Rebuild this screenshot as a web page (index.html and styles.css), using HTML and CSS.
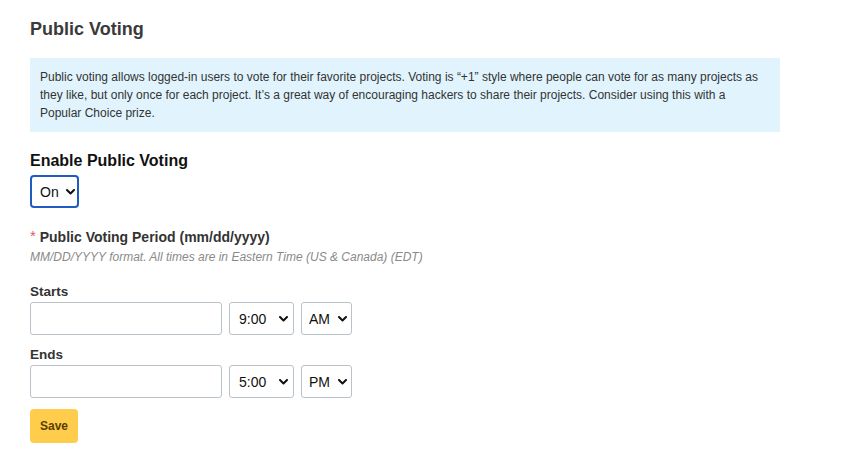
FILE: index.html
```html
<!DOCTYPE html>
<html lang="en">
<head>
<meta charset="utf-8">
<title>Public Voting</title>
<link rel="stylesheet" href="styles.css">
</head>
<body>
<main class="page">
  <h2 class="title">Public Voting</h2>
  <div class="info">Public voting allows logged-in users to vote for their favorite projects. Voting is “+1” style where people can vote for as many projects as they like, but only once for each project. It’s a great way of encouraging hackers to share their projects. Consider using this with a Popular Choice prize.</div>

  <h3 class="enable-label">Enable Public Voting</h3>
  <span class="select-wrap sel-on">
    <select class="select focused"><option>On</option><option>Off</option></select>
    <svg class="chev" width="9" height="6" viewBox="0 0 9 6"><path d="M1 1 L4.5 4.5 L8 1" fill="none" stroke="#111" stroke-width="2" stroke-linecap="round" stroke-linejoin="round"/></svg>
  </span>

  <div class="period-label"><span class="req">*</span> Public Voting Period (mm/dd/yyyy)</div>
  <div class="hint">MM/DD/YYYY format. All times are in Eastern Time (US &amp; Canada) (EDT)</div>

  <div class="field-label">Starts</div>
  <div class="row">
    <input class="text-input" type="text">
    <span class="select-wrap sel-time">
      <select class="select"><option>9:00</option></select>
      <svg class="chev" width="9" height="6" viewBox="0 0 9 6"><path d="M1 1 L4.5 4.5 L8 1" fill="none" stroke="#111" stroke-width="2" stroke-linecap="round" stroke-linejoin="round"/></svg>
    </span>
    <span class="select-wrap sel-ampm">
      <select class="select"><option>AM</option></select>
      <svg class="chev" width="9" height="6" viewBox="0 0 9 6"><path d="M1 1 L4.5 4.5 L8 1" fill="none" stroke="#111" stroke-width="2" stroke-linecap="round" stroke-linejoin="round"/></svg>
    </span>
  </div>

  <div class="field-label ends">Ends</div>
  <div class="row">
    <input class="text-input" type="text">
    <span class="select-wrap sel-time">
      <select class="select"><option>5:00</option></select>
      <svg class="chev" width="9" height="6" viewBox="0 0 9 6"><path d="M1 1 L4.5 4.5 L8 1" fill="none" stroke="#111" stroke-width="2" stroke-linecap="round" stroke-linejoin="round"/></svg>
    </span>
    <span class="select-wrap sel-ampm">
      <select class="select"><option>PM</option></select>
      <svg class="chev" width="9" height="6" viewBox="0 0 9 6"><path d="M1 1 L4.5 4.5 L8 1" fill="none" stroke="#111" stroke-width="2" stroke-linecap="round" stroke-linejoin="round"/></svg>
    </span>
  </div>

  <button class="save" type="button">Save</button>
</main>
</body>
</html>
```
FILE: styles.css
```css
* { box-sizing: border-box; }
html, body { margin: 0; padding: 0; background: #fff; }
body {
  font-family: "Liberation Sans", Arial, Helvetica, sans-serif;
  color: #333;
}
.page {
  padding: 18px 0 0 30px;
  display: flex;
  flex-direction: column;
  align-items: flex-start;
}
.title {
  margin: 0;
  font-size: 18px;
  line-height: 22px;
  font-weight: bold;
  color: #3a3a3a;
}
.info {
  margin-top: 18px;
  width: 750px;
  background: #e1f4fd;
  padding: 10px;
  font-size: 12px;
  line-height: 18px;
  color: #333;
}
.enable-label {
  margin: 19px 0 0 0;
  font-size: 16px;
  line-height: 20px;
  font-weight: bold;
  color: #111;
}
.select-wrap {
  position: relative;
  display: inline-flex;
}
.select {
  appearance: none;
  -webkit-appearance: none;
  font-family: "Liberation Sans", Arial, Helvetica, sans-serif;
  font-size: 14px;
  color: #111;
  background: #fff;
  border: 1px solid #b9c2c8;
  border-radius: 3px;
  height: 33px;
  padding: 0 0 0 9px;
  margin: 0;
  outline: none;
}
.select.focused {
  border: 2px solid #1e5dbf;
  border-radius: 4px;
  padding-left: 8px;
}
.chev {
  position: absolute;
  top: 14px;
  pointer-events: none;
}
.sel-on { margin-top: 4px; }
.sel-on .select { width: 49px; }
.sel-on .chev { right: 4px; }
.sel-time .select { width: 65px; }
.sel-time .chev { right: 6px; }
.sel-ampm .select { width: 51px; padding-left: 7px; }
.sel-ampm .chev { right: 5px; }

.period-label {
  margin-top: 20px;
  font-size: 14px;
  line-height: 18px;
  height: 18px;
  font-weight: bold;
  color: #333;
}
.req {
  color: #e5585c;
  font-weight: normal;
  font-size: 15px;
  line-height: 1;
  vertical-align: 1px;
}
.hint {
  margin-top: 3px;
  font-size: 12px;
  line-height: 16px;
  font-style: italic;
  color: #8a8a8a;
}
.field-label {
  margin-top: 18px;
  font-size: 13.5px;
  line-height: 17px;
  font-weight: bold;
  color: #333;
}
.field-label.ends { margin-top: 11px; }
.row {
  margin-top: 2px;
  display: flex;
  gap: 7px;
}
.text-input {
  width: 192px;
  height: 33px;
  border: 1px solid #b9c2c8;
  border-radius: 3px;
  margin: 0;
  padding: 0 8px;
  font-size: 14px;
  background: #fff;
  outline: none;
}
.save {
  margin-top: 11px;
  width: 48px;
  height: 34px;
  padding: 0;
  border: none;
  border-radius: 4px;
  background: #ffcc4b;
  color: #5a3e00;
  font-family: "Liberation Sans", Arial, Helvetica, sans-serif;
  font-size: 12px;
  font-weight: bold;
}
```
